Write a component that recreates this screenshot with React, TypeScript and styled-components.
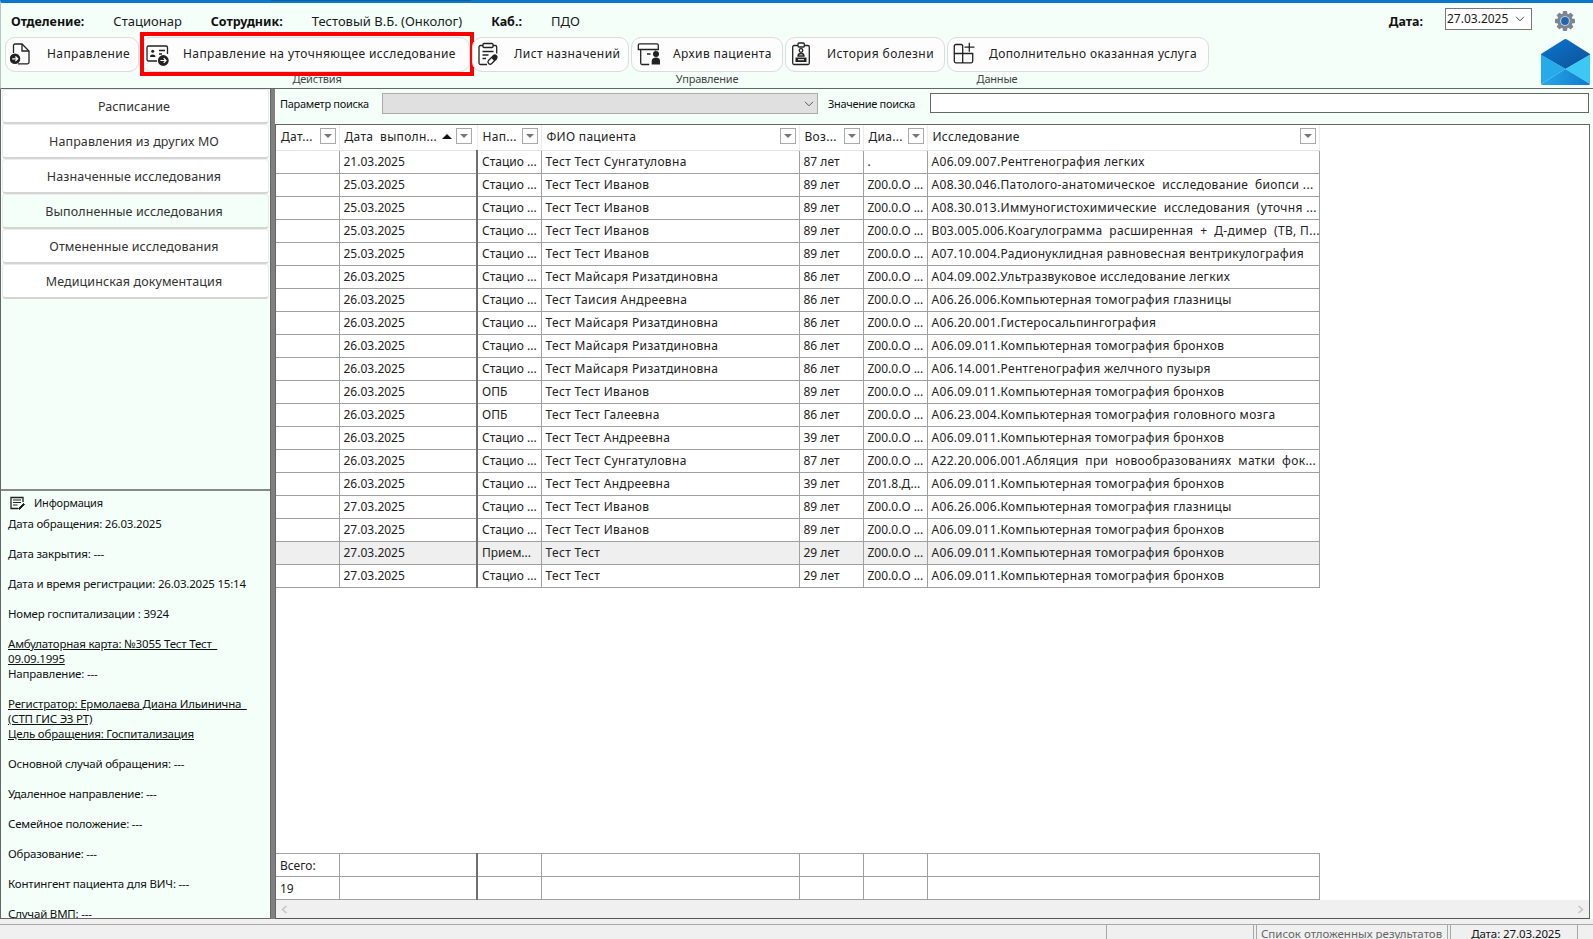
import React from "react";
import styled, { createGlobalStyle } from "styled-components";

const GlobalStyle = createGlobalStyle`
  html, body { margin: 0; padding: 0; background: #f0f0f0; }
  * { box-sizing: border-box; }
  body { font-family: "Noto Sans", "Open Sans", sans-serif; color: #1a1a1a; }
`;

const MINT = "#f4fffa";

const Page = styled.div`
  width: 1593px;
  height: 939px;
  display: flex;
  flex-direction: column;
  overflow: hidden;
`;

const Header = styled.header`
  height: 89px;
  flex: none;
  background: ${MINT};
  border-top: 3px solid #0a78c8;
  border-bottom: 1px solid #666;
  border-left: 1px solid #b5c9c0;
  position: relative;
`;

const TopAccent = styled.div`
  position: absolute;
  left: 270px;
  top: -3px;
  width: 200px;
  height: 1px;
  background: #0a5fa8;
`;

const InfoRow = styled.div`
  height: 34px;
  display: flex;
  align-items: center;
  gap: 29px;
  padding: 2px 17px 0 10px;
  font-size: 13px;
`;

const Label = styled.span`
  font-weight: 700;
  color: #111;
  font-size: 12.5px;
`;

const DateGroup = styled.div`
  margin-left: auto;
  display: flex;
  align-items: center;
  gap: 22px;
`;

const DateBox = styled.div`
  width: 87px;
  height: 22px;
  margin-top: -5px;
  border: 1px solid #777;
  background: #fff;
  display: flex;
  align-items: center;
  justify-content: space-between;
  padding: 0 6px 0 1px;
  font-size: 12px;
`;

const Toolbar = styled.div`
  display: flex;
  gap: 2px;
  padding-left: 4px;
  align-items: flex-start;
  position: relative;
`;

const Group = styled.div`
  display: flex;
  flex-direction: column;
  align-items: center;
`;

const GroupButtons = styled.div`
  display: flex;
  gap: 2px;
`;

const GroupTitle = styled.div`
  font-size: 11px;
  line-height: 13px;
  color: #444;
  letter-spacing: -0.2px;
`;

const ToolButton = styled.div<{ $w: number }>`
  width: ${(p) => p.$w}px;
  height: 35px;
  border: 1px solid #dcdcdc;
  border-radius: 10px;
  background: #fdfdfd;
  display: flex;
  align-items: center;
  gap: 13px;
  padding: 0 0 2px 4px;
  font-size: 12px;
  letter-spacing: 0.4px;
  white-space: pre;
  color: #222;
  position: relative;
`;

const RedFrame = styled.div`
  position: absolute;
  left: -2px;
  right: -5px;
  top: -6px;
  bottom: -5px;
  border: 4px solid #f00;
  pointer-events: none;
`;

const IconBox = styled.span`
  width: 24px;
  height: 24px;
  flex: none;
  display: flex;
  align-items: center;
  justify-content: center;
`;

const MailBox = styled.div`
  margin-left: auto;
  margin-right: 3px;
  margin-top: 1px;
  width: 49px;
  height: 47px;
`;

const Main = styled.main`
  height: 830px;
  flex: none;
  display: flex;
  background: #f0f0f0;
`;

const LeftPanel = styled.aside`
  width: 271px;
  flex: none;
  display: flex;
  flex-direction: column;
  border: 1px solid #666;
  border-top: none;
  background: ${MINT};
`;

const NavList = styled.nav`
  height: 402px;
  flex: none;
  padding: 0 1px;
  display: flex;
  flex-direction: column;
  border-bottom: 2px solid #888;
`;

const NavItem = styled.div<{ $active?: boolean }>`
  height: 35px;
  flex: none;
  display: flex;
  align-items: center;
  justify-content: center;
  padding-right: 3px;
  background: ${(p) => (p.$active ? MINT : "#fff")};
  border-radius: 4px;
  border: 1px solid #ececec;
  border-bottom: 2px solid #d4d4d4;
  font-size: 12.5px;
  letter-spacing: 0.1px;
  color: #333;
`;

const InfoPanel = styled.section`
  flex: 1;
  min-height: 0;
  overflow: hidden;
  padding: 3px 7px 0 7px;
  font-size: 11.5px;
  line-height: 15px;
  letter-spacing: -0.2px;
  color: #111;
`;

const InfoTitle = styled.div`
  display: flex;
  align-items: center;
  gap: 9px;
  height: 17px;
  margin: 0 0 5px 2px;
  font-size: 11px;
`;

const InfoLine = styled.div<{ $link?: boolean; $gap?: boolean }>`
  text-decoration: ${(p) => (p.$link ? "underline" : "none")};
  margin-bottom: ${(p) => (p.$gap ? "15px" : "0")};
  white-space: pre-wrap;
`;

const Splitter = styled.div`
  width: 4px;
  flex: none;
  background: #808080;
`;

const RightPanel = styled.div`
  flex: 1;
  min-width: 0;
  display: flex;
  flex-direction: column;
  background: ${MINT};
`;

const SearchRow = styled.div`
  height: 35px;
  flex: none;
  display: flex;
  align-items: flex-start;
  padding: 4px 4px 0 5px;
  font-size: 11px;
  letter-spacing: -0.3px;
`;

const SearchLabel = styled.span<{ $w: number }>`
  width: ${(p) => p.$w}px;
  flex: none;
  line-height: 22px;
  color: #111;
`;

const SearchSelect = styled.div`
  width: 436px;
  height: 21px;
  flex: none;
  margin-right: 10px;
  background: #e0e0e0;
  border: 1px solid #acacac;
  display: flex;
  align-items: center;
  justify-content: flex-end;
  padding-right: 3px;
`;

const SearchInput = styled.div`
  flex: 1;
  height: 20px;
  background: #fff;
  border: 1px solid #666;
`;

const TableFrame = styled.div`
  height: 795px;
  flex: none;
  margin-right: 3px;
  background: #fff;
  border: 1px solid #666;
  border-bottom: 1px solid #555;
  display: flex;
  flex-direction: column;
  overflow: hidden;
`;

const Grid = styled.table`
  table-layout: fixed;
  width: 1043px;
  border-collapse: collapse;
  font-size: 12px;
  flex: none;
`;

const HeadCell = styled.th<{ $sort?: boolean }>`
  height: 25px;
  padding: 0 ${(p) => (p.$sort ? "5px" : "3px")} 2px 5px;
  font-weight: 400;
  text-align: left;
  border-right: 1px solid #ececec;
  border-bottom: 1px solid #e4e4e4;
  letter-spacing: 0.3px;
  color: #222;
`;

const HeadInner = styled.div`
  display: flex;
  align-items: center;
  justify-content: space-between;
  white-space: pre;
`;

const HeadRight = styled.div`
  display: flex;
  align-items: center;
  gap: 4px;
`;

const FilterButton = styled.span`
  width: 16px;
  height: 16px;
  flex: none;
  border: 1px solid #aaa;
  background: #fcfcfc;
  display: flex;
  align-items: center;
  justify-content: center;

  &::after {
    content: "";
    border-left: 4px solid transparent;
    border-right: 4px solid transparent;
    border-top: 4px solid #777;
  }
`;

const SortArrow = styled.span`
  width: 0;
  height: 0;
  border-left: 5px solid transparent;
  border-right: 5px solid transparent;
  border-bottom: 5px solid #111;
`;

const Row = styled.tr<{ $selected?: boolean }>`
  background: ${(p) => (p.$selected ? "#efefef" : "transparent")};
`;

const Cell = styled.td<{ $strong?: boolean; $wide?: boolean }>`
  height: 23px;
  padding: 0 0 0 4px;
  border-right: ${(p) => (p.$strong ? "2px solid #707070" : "1px solid #a0a0a0")};
  border-bottom: 1px solid #a0a0a0;
  letter-spacing: ${(p) => (p.$wide ? "0.33px" : "0")};
  white-space: pre;
  overflow: hidden;
  color: #222;
`;

const FootCell = styled(Cell)`
  border-top: 1px solid #a0a0a0;
`;

const Spacer = styled.div`
  flex: 1;
  min-height: 0;
`;

const HScroll = styled.div`
  height: 18px;
  flex: none;
  background: #f0f0f0;
  display: flex;
  align-items: center;
  justify-content: space-between;
  padding: 0 5px;
`;

const StatusBar = styled.footer`
  flex: 1;
  margin-top: 5px;
  border-top: 1px solid #a8a8a8;
  background: #f0f0f0;
  display: flex;
  justify-content: flex-end;
  padding-right: 15px;
  font-size: 11.5px;
  overflow: hidden;
`;

const StatusCell = styled.div<{ $w: number; $dim?: boolean; $center?: boolean }>`
  width: ${(p) => p.$w}px;
  height: 18px;
  margin-left: 2px;
  border-left: 1px solid #a8a8a8;
  border-right: 1px solid #a8a8a8;
  color: ${(p) => (p.$dim ? "#666" : "#111")};
  text-align: ${(p) => (p.$center ? "center" : "left")};
  letter-spacing: ${(p) => (p.$center ? "-0.1px" : "0")};
  padding: 0 0 0 4px;
  line-height: 17px;
  white-space: nowrap;
`;

const columns = [63, 138, 64, 258, 64, 64, 392];

const DocIcon = () => (
  <svg width="24" height="24" viewBox="0 0 24 24" fill="none" stroke="#222" strokeWidth="1.3">
    <path d="M3.500 11V3.500C3.500 2.700 4.200 2 5 2h7l7 7v11.300c0 .8-.7 1.500-1.500 1.500H8" />
    <path d="M12 2v7h7" />
    <circle cx="5" cy="16.800" r="5.300" fill="#222" stroke="none" />
    <path d="M2.200 16.800h5.400M5.400 14.500l2.300 2.300-2.300 2.300" stroke="#fff" strokeWidth="1.200" />
  </svg>
);

const CardIcon = () => (
  <svg width="24" height="24" viewBox="0 0 24 24" fill="none" stroke="#222" strokeWidth="1.300">
    <path d="M11 19H2.500C1.700 19 1 18.300 1 17.500v-12C1 4.700 1.700 4 2.500 4h17.500c.8 0 1.500.7 1.500 1.500V12" />
    <circle cx="6.700" cy="9.200" r="1.500" fill="#222" stroke="none" />
    <path d="M4 15c0-1.800 1.200-2.500 2.700-2.500s2.700.7 2.700 2.500z" fill="#222" stroke="none" />
    <path d="M13 8.500h6M13 12h3" />
    <circle cx="17.300" cy="18.500" r="5.400" fill="#222" stroke="none" />
    <path d="M14.400 18.500h5.600M17.700 16.200l2.300 2.300-2.300 2.300" stroke="#fff" strokeWidth="1.200" />
  </svg>
);

const ClipboardIcon = () => (
  <svg width="24" height="24" viewBox="0 0 24 24" fill="none" stroke="#222" strokeWidth="1.300">
    <path d="M6 3.500H3.500C2.700 3.500 2 4.200 2 5v16c0 .8.7 1.500 1.500 1.500H10M16 3.500h2.200c.8 0 1.500.7 1.500 1.500v6.500" />
    <rect x="6" y="1.500" width="10" height="4" rx="1" />
    <path d="M5.500 9.500h11M5.500 13h6M5.500 16.500h3.500" />
    <path d="m11.500 18.500 5-5c1.800-1.500 4.800 1 3 3.200l-5 5c-1.800 1.700-4.800-1.200-3-3.200z" fill="#fff" />
    <path d="m14.200 15.800 2.300-2.300c1.800-1.500 4.800 1 3 3.200l-2.300 2.300z" fill="#222" stroke="none" />
  </svg>
);

const ArchiveIcon = () => (
  <svg width="24" height="24" viewBox="0 0 24 24" fill="none" stroke="#222" strokeWidth="1.300">
    <path d="M2.300 7.500V3.300c0-.8.7-1.500 1.500-1.500h17c.8 0 1.500.7 1.500 1.500v4.200z" />
    <path d="M4.700 7.500v13.500c0 .8.7 1.500 1.500 1.500h7M19.500 7.500v1" />
    <path d="M11 12h3.500" strokeWidth="1.500" />
    <circle cx="20" cy="12" r="3" fill="#222" stroke="none" />
    <path d="M15.700 22.500v-3.500c0-2 1.800-3.500 4.300-3.500s4 1.500 4 3.500v3.500z" fill="#222" stroke="none" />
  </svg>
);

const BadgeIcon = () => (
  <svg width="24" height="24" viewBox="0 0 24 24" fill="none" stroke="#222" strokeWidth="1.300">
    <rect x="2.700" y="3.500" width="16.600" height="19" rx="1.500" />
    <rect x="8" y="1" width="6.300" height="4" rx="1" fill={MINT} />
    <circle cx="11" cy="8.500" r="1.800" />
    <path d="M8 14c0-1.500 1.200-2.500 3-2.500s3 1 3 2.500z" />
    <rect x="5.500" y="15.500" width="11" height="4.500" fill="#222" stroke="none" />
    <path d="M8 17.700h6" stroke="#fff" strokeWidth="1" />
  </svg>
);

const AddGridIcon = () => (
  <svg width="24" height="24" viewBox="0 0 24 24" fill="none" stroke="#222" strokeWidth="1.300">
    <path d="M10.700 11.500V4a1.500 1.500 0 0 0-1.500-1.500H3.800A1.500 1.500 0 0 0 2.300 4v15.300a1.500 1.500 0 0 0 1.500 1.500h15.400a1.500 1.500 0 0 0 1.500-1.500v-7.800zM2.300 11.500h8.400M10.700 11.500v9.300" />
    <path d="M17.300.8v9M12.500 5.200h10" />
  </svg>
);

const Gear = () => (
  <svg width="22" height="22" viewBox="0 0 22 22">
    <g fill="#7d8690">
      <circle cx="11" cy="11" r="7.800" />
      {[0, 45, 90, 135, 180, 225, 270, 315].map((a) => (
        <rect key={a} x="8.800" y="1" width="4.400" height="5" rx="0.8" transform={`rotate(${a} 11 11)`} />
      ))}
    </g>
    <circle cx="11" cy="11" r="4.800" fill="#d5dde5" />
    <circle cx="11" cy="11" r="3.900" fill="#1f66b5" />
  </svg>
);

const MailIcon = () => (
  <svg width="49" height="47" viewBox="0 0 49 47">
    <defs>
      <linearGradient id="flap" x1="0" y1="0" x2="1" y2="1">
        <stop offset="0" stopColor="#0a78d0" />
        <stop offset="1" stopColor="#0f4f96" />
      </linearGradient>
      <linearGradient id="bottomFold" x1="0" y1="0" x2="1" y2="0">
        <stop offset="0" stopColor="#27aae8" />
        <stop offset="1" stopColor="#0f78cf" />
      </linearGradient>
    </defs>
    <path d="M0 16 23 1.500c1-.7 2-.7 3 0L49 16v1L24.500 31 0 17z" fill="url(#flap)" />
    <path d="M0 16.500 24.500 31 0 46z" fill="#27aae8" />
    <path d="M49 16.500 24.500 31 49 46z" fill="#3cc8f5" />
    <path d="M0 46 24.500 31 49 46c-.3.6-.8 1-1.500 1h-46C.8 47 .3 46.600 0 46z" fill="url(#bottomFold)" />
  </svg>
);

const NoteIcon = () => (
  <svg width="15" height="14" viewBox="0 0 15 14" fill="none" stroke="#222" strokeWidth="1">
    <path d="M8 12.500H1V1.500h12V6" strokeWidth="1.300" />
    <path d="M3 4h8M3 6.500h8M3 9h4.500" />
    <path d="m8.500 12.500 5-5 1 1-5 5z" fill="#222" />
  </svg>
);

const Chevron = () => (
  <svg width="10" height="6" viewBox="0 0 10 6" fill="none" stroke="#555" strokeWidth="1">
    <path d="m1 .8 4 4 4-4" />
  </svg>
);

const CaretSmall = ({ dir }: { dir: "left" | "right" }) => (
  <svg width="7" height="9" viewBox="0 0 7 9" fill="none" stroke="#c4c4c4" strokeWidth="1.500">
    <path d={dir === "left" ? "M5.500 1 1.500 4.500 5.500 8" : "M1.500 1 5.500 4.500 1.500 8"} />
  </svg>
);

const heads: { title: string; sort?: boolean }[] = [
  { title: "Дат..." },
  { title: "Дата  выполн...", sort: true },
  { title: "Нап..." },
  { title: "ФИО пациента" },
  { title: "Воз..." },
  { title: "Диа..." },
  { title: "Исследование" },
];

const ST = "Стацио ...";
const Z = "Z00.0.О ...";
const CT = "А06.09.011.Компьютерная томография бронхов";
const MAISARYA = "Тест Майсаря Ризатдиновна";
const IVANOV = "Тест Тест Иванов";

const rows: string[][] = [
  ["21.03.2025", ST, "Тест Тест Сунгатуловна", "87 лет", ".", "А06.09.007.Рентгенография легких"],
  ["25.03.2025", ST, IVANOV, "89 лет", Z, "А08.30.046.Патолого-анатомическое  исследование  биопси ..."],
  ["25.03.2025", ST, IVANOV, "89 лет", Z, "А08.30.013.Иммуногистохимические  исследования  (уточня ..."],
  ["25.03.2025", ST, IVANOV, "89 лет", Z, "В03.005.006.Коагулограмма  расширенная  +  Д-димер  (ТВ, П..."],
  ["25.03.2025", ST, IVANOV, "89 лет", Z, "А07.10.004.Радионуклидная равновесная вентрикулография"],
  ["26.03.2025", ST, MAISARYA, "86 лет", Z, "А04.09.002.Ультразвуковое исследование легких"],
  ["26.03.2025", ST, "Тест Таисия Андреевна", "86 лет", Z, "А06.26.006.Компьютерная томография глазницы"],
  ["26.03.2025", ST, MAISARYA, "86 лет", Z, "А06.20.001.Гистеросальпингография"],
  ["26.03.2025", ST, MAISARYA, "86 лет", Z, CT],
  ["26.03.2025", ST, MAISARYA, "86 лет", Z, "А06.14.001.Рентгенография желчного пузыря"],
  ["26.03.2025", "ОПБ", IVANOV, "89 лет", Z, CT],
  ["26.03.2025", "ОПБ", "Тест Тест Галеевна", "86 лет", Z, "А06.23.004.Компьютерная томография головного мозга"],
  ["26.03.2025", ST, "Тест Тест Андреевна", "39 лет", Z, CT],
  ["26.03.2025", ST, "Тест Тест Сунгатуловна", "87 лет", Z, "А22.20.006.001.Абляция  при  новообразованиях  матки  фок..."],
  ["26.03.2025", ST, "Тест Тест Андреевна", "39 лет", "Z01.8.Д...", CT],
  ["27.03.2025", ST, IVANOV, "89 лет", Z, "А06.26.006.Компьютерная томография глазницы"],
  ["27.03.2025", ST, IVANOV, "89 лет", Z, CT],
  ["27.03.2025", "Прием...", "Тест Тест", "29 лет", Z, CT],
  ["27.03.2025", ST, "Тест Тест", "29 лет", Z, CT],
];

const navItems = [
  "Расписание",
  "Направления из других МО",
  "Назначенные исследования",
  "Выполненные исследования",
  "Отмененные исследования",
  "Медицинская документация",
];

const infoLines: { text: string; link?: boolean; gap?: boolean }[] = [
  { text: "Дата обращения: 26.03.2025", gap: true },
  { text: "Дата закрытия: ---", gap: true },
  { text: "Дата и время регистрации: 26.03.2025 15:14", gap: true },
  { text: "Номер госпитализации : 3924", gap: true },
  { text: "Амбулаторная карта: №3055 Тест Тест  ", link: true },
  { text: "09.09.1995", link: true },
  { text: "Направление: ---", gap: true },
  { text: "Регистратор: Ермолаева Диана Ильинична  ", link: true },
  { text: "(СТП ГИС ЭЗ РТ)", link: true },
  { text: "Цель обращения: Госпитализация", link: true, gap: true },
  { text: "Основной случай обращения: ---", gap: true },
  { text: "Удаленное направление: ---", gap: true },
  { text: "Семейное положение: ---", gap: true },
  { text: "Образование: ---", gap: true },
  { text: "Контингент пациента для ВИЧ: ---", gap: true },
  { text: "Случай ВМП: ---" },
];

const Cols = () => (
  <colgroup>
    {columns.map((w, i) => (
      <col key={i} style={{ width: w }} />
    ))}
  </colgroup>
);

export default function App() {
  return (
    <>
      <GlobalStyle />
      <Page>
        <Header>
          <TopAccent />
          <InfoRow>
            <Label>Отделение:</Label>
            <span>Стационар</span>
            <Label>Сотрудник:</Label>
            <span>Тестовый В.Б. (Онколог)</span>
            <Label>Каб.:</Label>
            <span>ПДО</span>
            <DateGroup>
              <Label>Дата:</Label>
              <DateBox>
                27.03.2025
                <Chevron />
              </DateBox>
              <Gear />
            </DateGroup>
          </InfoRow>
          <Toolbar>
            <Group>
              <GroupButtons>
                <ToolButton $w={134}>
                  <IconBox><DocIcon /></IconBox>
                  Направление
                </ToolButton>
                <ToolButton $w={329}>
                  <IconBox><CardIcon /></IconBox>
                  Направление на уточняющее исследование
                  <RedFrame />
                </ToolButton>
                <ToolButton $w={157}>
                  <IconBox><ClipboardIcon /></IconBox>
                  Лист назначений
                </ToolButton>
              </GroupButtons>
              <GroupTitle>Действия</GroupTitle>
            </Group>
            <Group>
              <GroupButtons>
                <ToolButton $w={152}>
                  <IconBox><ArchiveIcon /></IconBox>
                  Архив пациента
                </ToolButton>
              </GroupButtons>
              <GroupTitle>Управление</GroupTitle>
            </Group>
            <Group>
              <GroupButtons>
                <ToolButton $w={160}>
                  <IconBox><BadgeIcon /></IconBox>
                  История болезни
                </ToolButton>
                <ToolButton $w={262}>
                  <IconBox><AddGridIcon /></IconBox>
                  Дополнительно оказанная услуга
                </ToolButton>
              </GroupButtons>
              <GroupTitle>Данные</GroupTitle>
            </Group>
            <MailBox><MailIcon /></MailBox>
          </Toolbar>
        </Header>
        <Main>
          <LeftPanel>
            <NavList>
              {navItems.map((n, i) => (
                <NavItem key={n} $active={i === 3}>{n}</NavItem>
              ))}
            </NavList>
            <InfoPanel>
              <InfoTitle>
                <NoteIcon />
                Информация
              </InfoTitle>
              {infoLines.map((l, i) => (
                <InfoLine key={i} $link={l.link} $gap={l.gap}>{l.text}</InfoLine>
              ))}
            </InfoPanel>
          </LeftPanel>
          <Splitter />
          <RightPanel>
            <SearchRow>
              <SearchLabel $w={102}>Параметр поиска</SearchLabel>
              <SearchSelect><Chevron /></SearchSelect>
              <SearchLabel $w={102}>Значение поиска</SearchLabel>
              <SearchInput />
            </SearchRow>
            <TableFrame>
              <Grid>
                <Cols />
                <thead>
                  <tr>
                    {heads.map((h, i) => (
                      <HeadCell key={i} $sort={h.sort}>
                        <HeadInner>
                          {h.title}
                          <HeadRight>
                            {h.sort && <SortArrow />}
                            <FilterButton />
                          </HeadRight>
                        </HeadInner>
                      </HeadCell>
                    ))}
                  </tr>
                </thead>
                <tbody>
                  {rows.map((r, i) => (
                    <Row key={i} $selected={i === 17}>
                      <Cell />
                      <Cell $strong>{r[0]}</Cell>
                      <Cell>{r[1]}</Cell>
                      <Cell $wide>{r[2]}</Cell>
                      <Cell>{r[3]}</Cell>
                      <Cell>{r[4]}</Cell>
                      <Cell $wide>{r[5]}</Cell>
                    </Row>
                  ))}
                </tbody>
              </Grid>
              <Spacer />
              <Grid>
                <Cols />
                <tbody>
                  <tr>
                    <FootCell>Всего:</FootCell>
                    <FootCell $strong />
                    <FootCell />
                    <FootCell />
                    <FootCell />
                    <FootCell />
                    <FootCell />
                  </tr>
                  <tr>
                    <FootCell>19</FootCell>
                    <FootCell $strong />
                    <FootCell />
                    <FootCell />
                    <FootCell />
                    <FootCell />
                    <FootCell />
                  </tr>
                </tbody>
              </Grid>
              <HScroll>
                <CaretSmall dir="left" />
                <CaretSmall dir="right" />
              </HScroll>
            </TableFrame>
          </RightPanel>
        </Main>
        <StatusBar>
          <StatusCell $w={148} />
          <StatusCell $w={192} $dim>Список отложенных результатов</StatusCell>
          <StatusCell $w={128} $center>Дата: 27.03.2025</StatusCell>
        </StatusBar>
      </Page>
    </>
  );
}
